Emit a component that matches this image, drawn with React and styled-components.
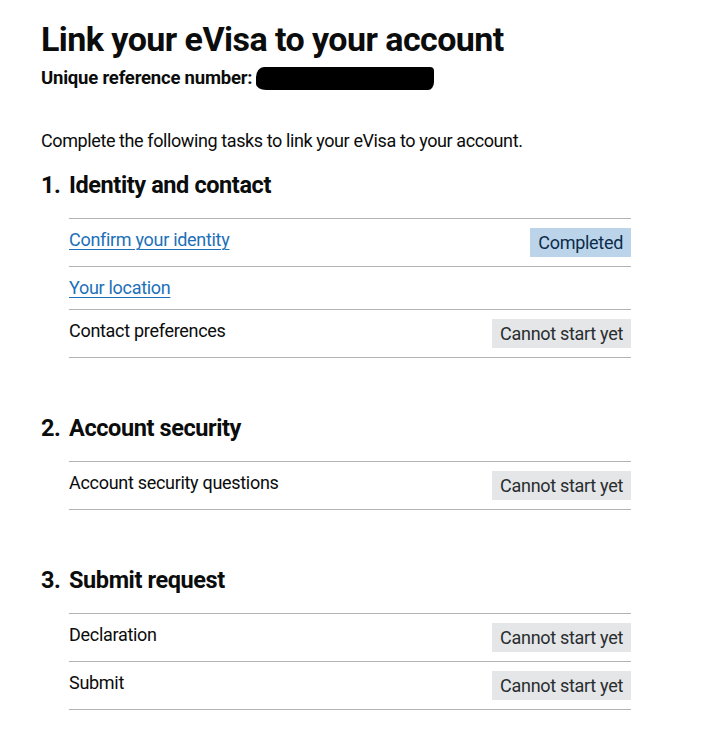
import React from "react";
import styled, { createGlobalStyle, css } from "styled-components";

const FONT = `Roboto, "Liberation Sans", Arial, sans-serif`;

const Global = createGlobalStyle`
  html, body { margin: 0; padding: 0; background: #ffffff; }
  body { font-family: ${FONT}; color: #0b0c0c; }
`;

const Page = styled.main`
  padding: 18px 77px 40px 41px;
  max-width: 590px;
`;

const Title = styled.h1`
  margin: 0;
  font-size: 34px;
  line-height: 42px;
  font-weight: 700;
  letter-spacing: -0.55px;
`;

const Reference = styled.p`
  margin: 6px 0 0;
  display: flex;
  align-items: center;
  font-size: 18.5px;
  line-height: 24px;
  font-weight: 700;
  letter-spacing: -0.2px;
`;

const Redaction = styled.span`
  display: inline-block;
  width: 178px;
  height: 23px;
  margin-left: 4px;
  background: #000;
  border-radius: 8px 4px 6px 10px / 10px 4px 8px 6px;
`;

const Intro = styled.p`
  margin: 39px 0 0;
  font-size: 18px;
  line-height: 24px;
  letter-spacing: -0.4px;
`;

const Section = styled.section`
  margin-top: ${(p) => p.$gap}px;
`;

const SectionHeading = styled.h2`
  margin: 0;
  display: flex;
  font-size: 23.5px;
  line-height: 30px;
  font-weight: 700;
  letter-spacing: -0.4px;
`;

const Num = styled.span`
  width: 28px;
  flex: none;
`;

const TaskList = styled.ul`
  list-style: none;
  margin: 18px 0 0 28px;
  padding: 0;
  border-top: 1px solid #b1b4b6;
`;

const TaskItem = styled.li`
  display: flex;
  justify-content: space-between;
  align-items: flex-start;
  padding: 9px 0;
  border-bottom: 1px solid #b1b4b6;
  font-size: 18px;
  line-height: 24px;
  letter-spacing: -0.3px;
`;

const TaskName = styled.span`
  display: block;
`;

const TaskLink = styled.a`
  color: #1d70b8;
  text-decoration: underline;
  text-decoration-thickness: 1px;
  text-underline-offset: 3px;
`;

const tagVariants = {
  blue: css`
    background: #bbd4ea;
    color: #0c2d4a;
  `,
  grey: css`
    background: #e5e6e7;
    color: #282d30;
  `,
};

const Tag = styled.strong`
  display: inline-block;
  padding: 2px 8px 2px;
  font-weight: 400;
  font-size: 18px;
  line-height: 25px;
  letter-spacing: -0.3px;
  ${(p) => tagVariants[p.$variant]}
`;

const sections = [
  {
    n: "1.",
    title: "Identity and contact",
    gap: 17,
    tasks: [
      { name: "Confirm your identity", link: true, status: "Completed", variant: "blue" },
      { name: "Your location", link: true },
      { name: "Contact preferences", status: "Cannot start yet", variant: "grey" },
    ],
  },
  {
    n: "2.",
    title: "Account security",
    gap: 55,
    tasks: [{ name: "Account security questions", status: "Cannot start yet", variant: "grey" }],
  },
  {
    n: "3.",
    title: "Submit request",
    gap: 55,
    tasks: [
      { name: "Declaration", status: "Cannot start yet", variant: "grey" },
      { name: "Submit", status: "Cannot start yet", variant: "grey" },
    ],
  },
];

export default function App() {
  return (
    <>
      <Global />
      <Page>
        <Title>Link your eVisa to your account</Title>
        <Reference>
          Unique reference number:<Redaction aria-label="redacted" />
        </Reference>
        <Intro>Complete the following tasks to link your eVisa to your account.</Intro>
        {sections.map((s) => (
          <Section key={s.n} $gap={s.gap}>
            <SectionHeading>
              <Num>{s.n}</Num>
              {s.title}
            </SectionHeading>
            <TaskList>
              {s.tasks.map((t) => (
                <TaskItem key={t.name}>
                  <TaskName>
                    {t.link ? <TaskLink href="#">{t.name}</TaskLink> : t.name}
                  </TaskName>
                  {t.status && <Tag $variant={t.variant}>{t.status}</Tag>}
                </TaskItem>
              ))}
            </TaskList>
          </Section>
        ))}
      </Page>
    </>
  );
}
